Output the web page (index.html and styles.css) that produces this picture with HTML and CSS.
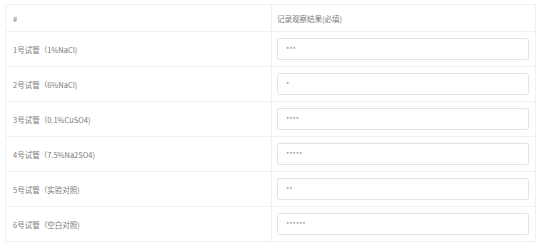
FILE: index.html
```html
<!DOCTYPE html>
<html lang="zh">
<head>
<meta charset="utf-8">
<link rel="stylesheet" href="styles.css">
</head>
<body>
<div class="wrap">
  <table class="grid">
    <colgroup><col class="c1"><col class="c2"></colgroup>
    <thead>
      <tr><th>#</th><th>记录观察结果(必填)</th></tr>
    </thead>
    <tbody>
      <tr><td>1号试管（1%NaCl)</td><td><div class="inp">***</div></td></tr>
      <tr><td>2号试管（6%NaCl)</td><td><div class="inp">*</div></td></tr>
      <tr><td>3号试管（0.1%CuSO4)</td><td><div class="inp">****</div></td></tr>
      <tr><td>4号试管（7.5%Na2SO4)</td><td><div class="inp">*****</div></td></tr>
      <tr><td>5号试管（实验对照)</td><td><div class="inp">**</div></td></tr>
      <tr><td>6号试管（空白对照)</td><td><div class="inp">******</div></td></tr>
    </tbody>
  </table>
</div>
</body>
</html>
```
FILE: styles.css
```css
html, body {
  margin: 0;
  padding: 0;
  background: #ffffff;
}
.wrap {
  padding: 4px 0 0 5px;
}
.grid {
  width: 530px;
  border-collapse: collapse;
  table-layout: fixed;
  font-family: "Noto Sans CJK SC", "Noto Sans", sans-serif;
  font-size: 7.5px;
  color: #7a7a7a;
}
.c1 { width: 266px; }
.c2 { width: 264px; }
.grid th, .grid td {
  border: 1px solid #f0f1f4;
  text-align: left;
  font-weight: normal;
  padding: 0 0 0 7px;
  vertical-align: middle;
}
.grid thead th {
  height: 26px;
}
.grid tbody td {
  height: 34px;
}
.grid tbody td:last-child,
.grid thead th:last-child {
  padding: 0 6px 0 5px;
}
.inp {
  height: 20px;
  border: 1px solid #e3e4e8;
  border-radius: 2px;
  box-sizing: content-box;
  display: flex;
  align-items: center;
  padding-left: 8px;
  color: #8a8a8a;
  font-size: 7px;
  letter-spacing: 0;
}
```
